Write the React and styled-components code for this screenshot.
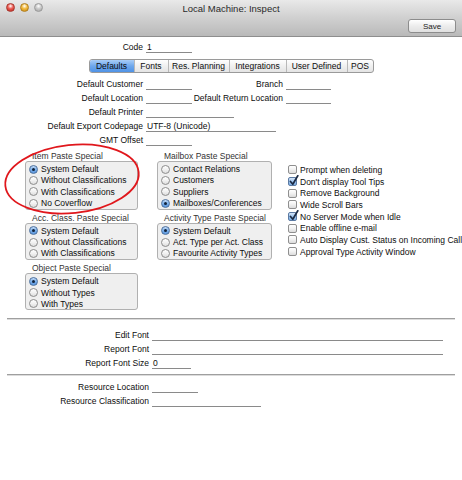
import styled, { createGlobalStyle } from 'styled-components'

const GlobalStyle = createGlobalStyle`
    html, body {
        margin: 0;
        padding: 0;
        background: #ffffff;
    }
    body {
        font-family: "Liberation Sans", Arial, sans-serif;
        font-size: 8.5px;
        color: #111;
    }
`

const Window = styled.div`
    position: relative;
    width: 462px;
    height: 480px;
    overflow: hidden;
    background: #ffffff;
    display: flex;
    flex-direction: column;
`

/* Title bar */

const TitleBar = styled.header`
    height: 36px;
    border-bottom: 1px solid #8e8e8e;
    background: linear-gradient(#e9e9e9, #d2d2d2 45%, #b9b9b9);
    display: flex;
    flex-direction: column;
`

const TitleRow = styled.div`
    position: relative;
    height: 16px;
    display: flex;
    align-items: center;
    justify-content: center;
`

const Lights = styled.div`
    position: absolute;
    left: 6px;
    top: 3px;
    display: flex;
    gap: 5px;
`

const Light = styled.span`
    width: 9px;
    height: 9px;
    border-radius: 50%;
    box-sizing: border-box;
    border: 1px solid ${(p) => p.$edge};
    background: radial-gradient(circle at 50% 30%, #ffffff 0, ${(p) => p.$color} 45%, ${(p) => p.$dark} 100%);
`

const Title = styled.h1`
    margin: 0;
    font-size: 9.5px;
    font-weight: normal;
    color: #2a2a2a;
`

const ToolRow = styled.div`
    display: flex;
    justify-content: flex-end;
    padding: 3px 6px 0 0;
`

const SaveButton = styled.button`
    width: 48px;
    height: 14px;
    padding: 0;
    border: 1px solid #8c8c8c;
    border-radius: 3px;
    background: linear-gradient(#ffffff, #ececec 50%, #e0e0e0);
    font-family: "Liberation Sans", Arial, sans-serif;
    font-size: 8px;
    color: #222;
`

/* Body */

const Body = styled.main`
    padding-top: 3px;
    display: flex;
    flex-direction: column;
`

const Row = styled.div`
    height: 14px;
    display: flex;
    align-items: center;
    white-space: nowrap;
`

const Label = styled.span`
    width: ${(p) => p.$w};
    flex: none;
    text-align: right;
    color: #0d0d0d;
`

const Field = styled.span`
    box-sizing: border-box;
    width: ${(p) => p.$w};
    height: 11px;
    margin-left: 3px;
    padding-left: 1px;
    line-height: 11px;
    border-bottom: 1px solid #8a8a8a;
    flex: none;
    color: #0d0d0d;
`

const TabBar = styled.nav`
    margin: 5px 0 4px;
    display: flex;
    justify-content: center;
`

const Tabs = styled.div`
    display: flex;
    height: 12px;
    border: 1px solid #9a9a9a;
    border-radius: 3px;
    overflow: hidden;
    background: linear-gradient(#ffffff, #f0f0f0 50%, #e4e4e4);
`

const Tab = styled.span`
    width: ${(p) => p.$w};
    box-sizing: border-box;
    display: flex;
    align-items: center;
    justify-content: center;
    font-size: 8.5px;
    color: #0d0d0d;
    border-left: ${(p) => (p.$first ? 'none' : '1px solid #b8b8b8')};
    ${(p) =>
        p.$active &&
        'background: linear-gradient(#a9cdf7, #6ea7ec 50%, #4f92e6); border-left: none;'}
`

const Columns = styled.div`
    display: flex;
    padding-left: 25px;
    margin-top: 4px;
`

const Column = styled.div`
    width: ${(p) => p.$w};
    margin-right: ${(p) => p.$gap || '0'};
    display: flex;
    flex-direction: column;
    flex: none;
`

const GroupTitle = styled.div`
    height: 10px;
    line-height: 10px;
    padding-left: 7px;
    color: #333;
    white-space: nowrap;
    margin-top: ${(p) => (p.$first ? '0' : '3px')};
`

const GroupBox = styled.div`
    border: 1px solid #b0b0b0;
    border-radius: 3px;
    background: #efefef;
    padding: 1.5px 0 0 3px;
`

const Option = styled.div`
    height: 11.3px;
    display: flex;
    align-items: center;
    gap: 3px;
    white-space: nowrap;
    color: #0d0d0d;
`

const RadioDot = styled.span`
    width: 9px;
    height: 9px;
    box-sizing: border-box;
    border-radius: 50%;
    flex: none;
    display: flex;
    align-items: center;
    justify-content: center;
    border: 1px solid ${(p) => (p.$on ? '#4a6f9e' : '#8d8d8d')};
    background: ${(p) =>
        p.$on
            ? 'linear-gradient(#c6dcf7, #79aee9 50%, #5d98de)'
            : 'linear-gradient(#ffffff, #f1f1f1 50%, #dedede)'};
    &::after {
        content: '';
        display: ${(p) => (p.$on ? 'block' : 'none')};
        width: 3px;
        height: 3px;
        border-radius: 50%;
        background: #10213a;
    }
`

const CheckList = styled.div`
    padding-top: 13px;
    display: flex;
    flex-direction: column;
`

const CheckRow = styled.div`
    height: 11.7px;
    display: flex;
    align-items: center;
    gap: 3px;
    white-space: nowrap;
    color: #0d0d0d;
`

const CheckBox = styled.span`
    position: relative;
    width: 9px;
    height: 9px;
    box-sizing: border-box;
    border-radius: 2px;
    flex: none;
    border: 1px solid ${(p) => (p.$on ? '#5b7aa3' : '#8f8f8f')};
    background: ${(p) =>
        p.$on
            ? 'linear-gradient(#d5e5f8, #9cc3ee 50%, #7fb0e6)'
            : 'linear-gradient(#ffffff, #f1f1f1 50%, #dcdcdc)'};
    svg {
        position: absolute;
        left: 0;
        top: -3px;
    }
`

const Separator = styled.hr`
    margin: ${(p) => p.$m || '0'} 7px;
    height: 0;
    border: none;
    border-top: 1px solid #9f9f9f;
    border-bottom: 1px solid #dcdcdc;
`

const Annotation = styled.svg`
    position: absolute;
    left: 0;
    top: 140px;
    pointer-events: none;
`

const Check = () => (
    <svg width="10" height="11" viewBox="0 0 10 11">
        <path d="M1.5 6.5 L3.8 9.2 L8.8 0.8" fill="none" stroke="#1b2a44" strokeWidth="1.7" strokeLinecap="round" strokeLinejoin="round" />
    </svg>
)

const Radio = ({ on, children }) => (
    <Option>
        <RadioDot $on={on} />
        {children}
    </Option>
)

const Group = ({ title, first, options, selected }) => (
    <>
        <GroupTitle $first={first}>{title}</GroupTitle>
        <GroupBox>
            {options.map((o, i) => (
                <Radio key={o} on={i === selected}>
                    {o}
                </Radio>
            ))}
        </GroupBox>
    </>
)

const tabs = [
    ['Defaults', '44px'],
    ['Fonts', '34px'],
    ['Res. Planning', '61px'],
    ['Integrations', '57px'],
    ['User Defined', '61px'],
    ['POS', '26px'],
]

const checks = [
    ['Prompt when deleting', false],
    ["Don't display Tool Tips", true],
    ['Remove Background', false],
    ['Wide Scroll Bars', false],
    ['No Server Mode when Idle', true],
    ['Enable offline e-mail', false],
    ['Auto Display Cust. Status on Incoming Calls', false],
    ['Approval Type Activity Window', false],
]

export default function App() {
    return (
        <Window>
            <GlobalStyle />
            <TitleBar>
                <TitleRow>
                    <Lights>
                        <Light $color="#ec5a52" $dark="#b8231c" $edge="#a8382f" />
                        <Light $color="#f2b93a" $dark="#c58711" $edge="#b07f22" />
                        <Light $color="#c9c9c9" $dark="#a2a2a2" $edge="#9a9a9a" />
                    </Lights>
                    <Title>Local Machine: Inspect</Title>
                </TitleRow>
                <ToolRow>
                    <SaveButton>Save</SaveButton>
                </ToolRow>
            </TitleBar>

            <Body>
                <Row>
                    <Label $w="143px">Code</Label>
                    <Field $w="46px">1</Field>
                </Row>

                <TabBar>
                    <Tabs>
                        {tabs.map(([t, w], i) => (
                            <Tab key={t} $w={w} $first={i === 0} $active={i === 0}>
                                {t}
                            </Tab>
                        ))}
                    </Tabs>
                </TabBar>

                <Row>
                    <Label $w="143px">Default Customer</Label>
                    <Field $w="46px" />
                    <Label $w="91px">Branch</Label>
                    <Field $w="45px" />
                </Row>
                <Row>
                    <Label $w="143px">Default Location</Label>
                    <Field $w="46px" />
                    <Label $w="91px">Default Return Location</Label>
                    <Field $w="45px" />
                </Row>
                <Row>
                    <Label $w="143px">Default Printer</Label>
                    <Field $w="88px" />
                </Row>
                <Row>
                    <Label $w="143px">Default Export Codepage</Label>
                    <Field $w="130px">UTF-8 (Unicode)</Field>
                </Row>
                <Row>
                    <Label $w="143px">GMT Offset</Label>
                    <Field $w="46px" />
                </Row>

                <Columns>
                    <Column $w="113px" $gap="19px">
                        <Group
                            first
                            title="Item Paste Special"
                            selected={0}
                            options={['System Default', 'Without Classifications', 'With Classifications', 'No Coverflow']}
                        />
                        <Group
                            title="Acc. Class. Paste Special"
                            selected={0}
                            options={['System Default', 'Without Classifications', 'With Classifications']}
                        />
                        <Group
                            title="Object Paste Special"
                            selected={0}
                            options={['System Default', 'Without Types', 'With Types']}
                        />
                    </Column>
                    <Column $w="115px" $gap="16px">
                        <Group
                            first
                            title="Mailbox Paste Special"
                            selected={3}
                            options={['Contact Relations', 'Customers', 'Suppliers', 'Mailboxes/Conferences']}
                        />
                        <Group
                            title="Activity Type Paste Special"
                            selected={0}
                            options={['System Default', 'Act. Type per Act. Class', 'Favourite Activity Types']}
                        />
                    </Column>
                    <CheckList>
                        {checks.map(([t, on]) => (
                            <CheckRow key={t}>
                                <CheckBox $on={on}>{on && <Check />}</CheckBox>
                                {t}
                            </CheckRow>
                        ))}
                    </CheckList>
                </Columns>

                <Separator $m="8px" />

                <Row>
                    <Label $w="149px">Edit Font</Label>
                    <Field $w="291px" />
                </Row>
                <Row>
                    <Label $w="149px">Report Font</Label>
                    <Field $w="291px" />
                </Row>
                <Row>
                    <Label $w="149px">Report Font Size</Label>
                    <Field $w="39px">0</Field>
                </Row>

                <Separator $m="4px" />

                <Row>
                    <Label $w="149px">Resource Location</Label>
                    <Field $w="46px" />
                </Row>
                <Row>
                    <Label $w="149px">Resource Classification</Label>
                    <Field $w="109px" />
                </Row>
            </Body>

            <Annotation width="160" height="85" viewBox="0 0 160 85">
                <ellipse cx="72" cy="39" rx="67" ry="34" transform="rotate(-6 72 39)" fill="none" stroke="#e0171c" strokeWidth="1.8" />
            </Annotation>
        </Window>
    )
}
